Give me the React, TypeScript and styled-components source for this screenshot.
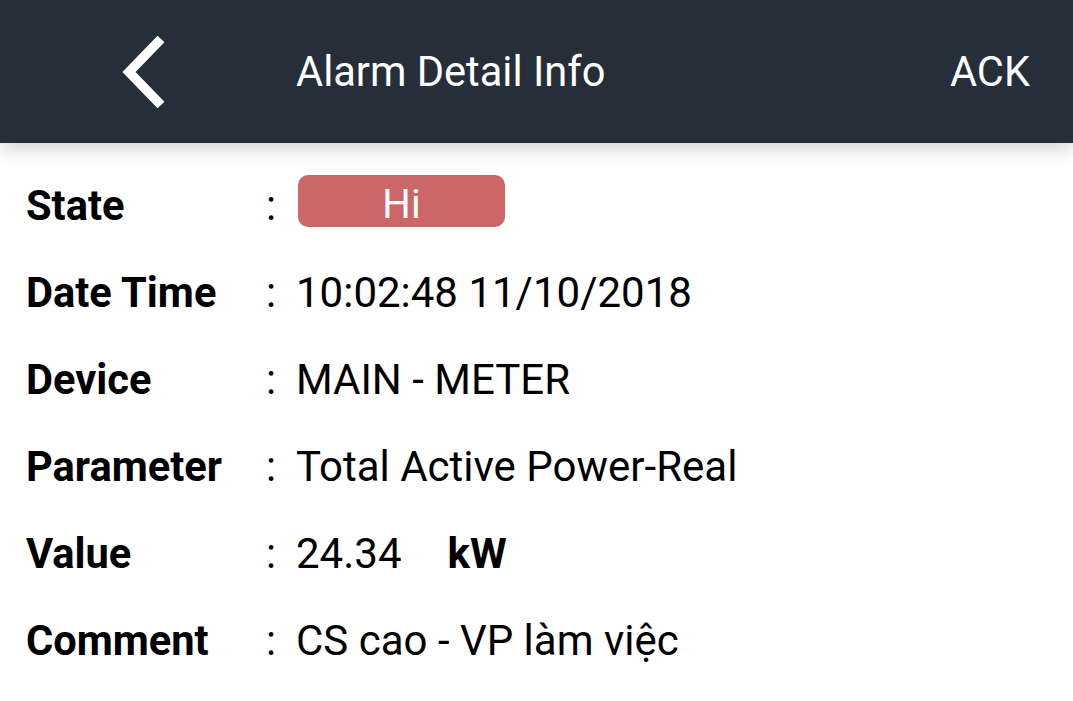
import React from "react";
import styled, { createGlobalStyle } from "styled-components";

const GlobalStyle = createGlobalStyle`
  html, body {
    margin: 0;
    padding: 0;
    background: #ffffff;
    font-family: Roboto, "Noto Sans", sans-serif;
  }
`;

const Page = styled.div`
  width: 1073px;
  height: 701px;
  overflow: hidden;
  background: #ffffff;
`;

const Header = styled.div`
  height: 143px;
  background: #252e39;
  display: flex;
  align-items: center;
  padding: 0 43px 0 121px;
  box-sizing: border-box;
  color: #ffffff;
  position: relative;
  z-index: 1;
  box-shadow: 0 6px 18px rgba(0, 0, 0, 0.18);
`;

const BackButton = styled.div`
  width: 46px;
  height: 72px;
  display: flex;
  align-items: center;
`;

const Title = styled.div`
  flex: 1;
  margin-left: 129px;
  font-size: 41.6px;
  font-weight: 400;
`;

const Action = styled.div`
  font-size: 41.6px;
  font-weight: 400;
`;

const Body = styled.div`
  padding: 19px 0 0 26px;
  display: flex;
  flex-direction: column;
`;

const Row = styled.div`
  display: grid;
  grid-template-columns: 240px 30px 1fr;
  align-items: center;
  height: 87px;
`;

const Label = styled.div`
  font-size: 41.6px;
  font-weight: 700;
  color: #000000;
`;

const Colon = styled.div`
  font-size: 41.6px;
  color: #000000;
`;

const Value = styled.div`
  font-size: 42px;
  color: #000000;
  display: flex;
  align-items: center;
`;

const Unit = styled.span`
  font-weight: 700;
  margin-left: 46px;
`;

const Badge = styled.div<{ $color: string }>`
  width: 207px;
  height: 52px;
  border-radius: 10px;
  background: ${(p) => p.$color};
  color: #ffffff;
  font-size: 40px;
  display: flex;
  align-items: center;
  justify-content: center;
  padding-top: 6px;
  box-sizing: border-box;
  margin: -9px 0 0 2px;
`;

const Chevron = () => (
  <svg width="46" height="72" viewBox="0 0 46 72">
    <path d="M40 3 L8 36 L40 69" fill="none" stroke="#ffffff" strokeWidth="9.5" strokeLinecap="butt" strokeLinejoin="miter" />
  </svg>
);

const rows: { label: string; value: React.ReactNode }[] = [
  { label: "State", value: <Badge $color="#cc6667">Hi</Badge> },
  { label: "Date Time", value: "10:02:48 11/10/2018" },
  { label: "Device", value: "MAIN - METER" },
  { label: "Parameter", value: "Total Active Power-Real" },
  {
    label: "Value",
    value: (
      <>
        24.34<Unit>kW</Unit>
      </>
    ),
  },
  { label: "Comment", value: "CS cao - VP làm việc" },
];

export default function App() {
  return (
    <Page>
      <GlobalStyle />
      <Header>
        <BackButton>
          <Chevron />
        </BackButton>
        <Title>Alarm Detail Info</Title>
        <Action>ACK</Action>
      </Header>
      <Body>
        {rows.map((r) => (
          <Row key={r.label}>
            <Label>{r.label}</Label>
            <Colon>:</Colon>
            <Value>{r.value}</Value>
          </Row>
        ))}
      </Body>
    </Page>
  );
}
